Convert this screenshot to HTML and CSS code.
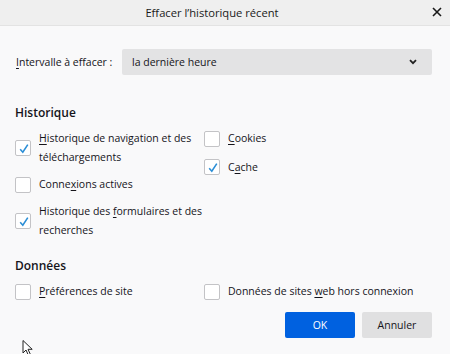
FILE: index.html
```html
<!DOCTYPE html>
<html lang="fr">
<head>
    <meta charset="UTF-8">
    <title>Effacer l'historique récent</title>
    <link rel="stylesheet" href="styles.css">
</head>
<body>
    <div class="titlebar">
        <span class="title">Effacer l’historique récent</span>
        <svg class="close" width="10" height="10" viewBox="0 0 10 10">
            <path d="M1 1 L9 9 M9 1 L1 9" stroke="#1a1a1a" stroke-width="1.6" fill="none"/>
        </svg>
    </div>

    <div class="dialog">
        <div class="range-row">
            <span class="range-label"><u>I</u>ntervalle à effacer :</span>
            <div class="select">
                <span>la dernière heure</span>
                <svg width="8" height="6" viewBox="0 0 8 6">
                    <path d="M1 1.2 L4 4.2 L7 1.2" stroke="#222" stroke-width="1.8" fill="none"/>
                </svg>
            </div>
        </div>

        <h2 class="section-title">Historique</h2>
        <div class="columns">
            <div class="col col-left">
                <label class="check"><span class="box checked"></span><span class="text"><u>H</u>istorique de navigation et des téléchargements</span></label>
                <label class="check"><span class="box"></span><span class="text">Conne<u>x</u>ions actives</span></label>
                <label class="check"><span class="box checked"></span><span class="text">Historique des <u>f</u>ormulaires et des recherches</span></label>
            </div>
            <div class="col">
                <label class="check short"><span class="box"></span><span class="text"><u>C</u>ookies</span></label>
                <label class="check short"><span class="box checked"></span><span class="text">C<u>a</u>che</span></label>
            </div>
        </div>

        <h2 class="section-title data-title">Données</h2>
        <div class="columns">
            <div class="col col-left">
                <label class="check"><span class="box"></span><span class="text"><u>P</u>références de site</span></label>
            </div>
            <div class="col">
                <label class="check"><span class="box"></span><span class="text">Données de sites <u>w</u>eb hors connexion</span></label>
            </div>
        </div>

        <div class="buttons">
            <button class="btn btn-primary">OK</button>
            <button class="btn">Annuler</button>
        </div>
    </div>

    <!-- mouse pointer left in the capture -->
    <svg class="pointer" width="14" height="16" viewBox="0 0 14 16">
        <path d="M1 0.5 L1 13 L4 10 L6.5 15.5 L8.5 14.6 L6 9.3 L10.2 9.3 Z" fill="#fff" stroke="#222" stroke-width="1"/>
    </svg>
</body>
</html>
```

FILE: styles.css
```css
/* General Styles */
body {
    margin: 0;
    width: 450px;
    height: 354px;
    overflow: hidden;
    position: relative;
    background-color: #f9f9fa;
    font-family: "Open Sans", "Noto Sans", sans-serif;
    font-size: 10.5px;
    color: #15141a;
}

u {
    text-decoration-thickness: 1px;
    text-underline-offset: 2px;
}

.titlebar {
    height: 25px;
    background-color: #efefef;
    border-bottom: 1px solid #e3e3e3;
    display: flex;
    align-items: center;
    justify-content: center;
    padding-right: 26px;
    position: relative;
}

.title {
    font-size: 11.2px;
    color: #1a1a1a;
}

.close {
    position: absolute;
    right: 8px;
    top: 7px;
}

.dialog {
    padding: 23px 18px 0 15px;
}

/* Range select */
.range-row {
    display: flex;
    align-items: center;
    height: 26px;
}

.range-label {
    margin-left: 1px;
    width: 106px;
}

.select {
    flex: 1;
    height: 26px;
    background-color: #e3e3e4;
    border-radius: 2px;
    display: flex;
    align-items: center;
    justify-content: space-between;
    padding: 0 15px 0 10px;
}

/* Sections */
.section-title {
    font-size: 12px;
    font-weight: 600;
    margin: 28px 0 2px;
    line-height: 20px;
}

.data-title {
    margin-top: 12px;
}

.columns {
    display: flex;
}

.col {
    display: flex;
    flex-direction: column;
}

.col-left {
    width: 189px;
}

.check {
    display: flex;
    align-items: center;
    padding: 4px 0;
    line-height: 19px;
}

.check.short {
    padding-bottom: 5.5px;
}

.box {
    width: 16px;
    height: 16px;
    box-sizing: border-box;
    border: 1px solid #c3c3c6;
    border-radius: 2px;
    background-color: #fff;
    flex-shrink: 0;
    margin-right: 8px;
}

.box.checked {
    background-image: url("data:image/svg+xml,%3Csvg xmlns='http://www.w3.org/2000/svg' width='16' height='16'%3E%3Cpath d='M4.2 8.3 L6.8 11.2 L11.8 3.6' stroke='%232b8ed6' stroke-width='1.6' fill='none'/%3E%3C/svg%3E");
}

.col-left .text {
    width: 165px;
}

/* Buttons */
.buttons {
    display: flex;
    justify-content: flex-end;
    gap: 7px;
    margin-top: 7px;
}

.btn {
    width: 70px;
    height: 26px;
    border: none;
    border-radius: 2px;
    background-color: #e0e0e1;
    color: #15141a;
    font-family: inherit;
    font-size: 10.5px;
    padding: 0;
}

.btn-primary {
    background-color: #0061e0;
    color: #fff;
}

.pointer {
    position: absolute;
    left: 22px;
    top: 340px;
}
```
